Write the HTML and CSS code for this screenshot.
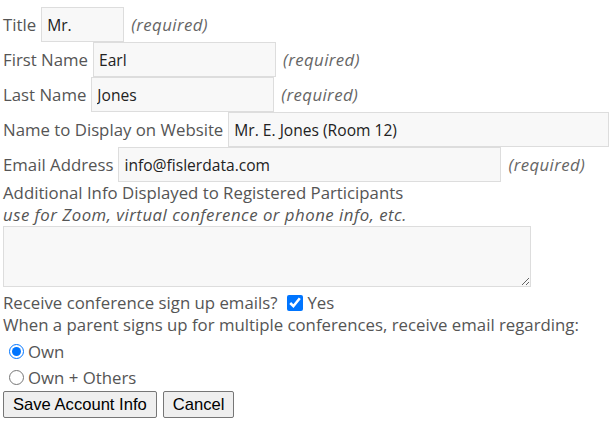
FILE: index.html
```html
<!DOCTYPE html>
<html>
<head>
<meta charset="utf-8">
<link rel="stylesheet" href="styles.css">
</head>
<body>
<form class="form">
  <div class="row">
    <label class="lbl">Title</label>
    <input class="field w-title" type="text" value="Mr.">
    <span class="req">(required)</span>
  </div>
  <div class="row">
    <label class="lbl">First Name</label>
    <input class="field w-name" type="text" value="Earl">
    <span class="req">(required)</span>
  </div>
  <div class="row">
    <label class="lbl">Last Name</label>
    <input class="field w-name" type="text" value="Jones">
    <span class="req">(required)</span>
  </div>
  <div class="row">
    <label class="lbl">Name to Display on Website</label>
    <input class="field w-wide" type="text" value="Mr. E. Jones (Room 12)">
  </div>
  <div class="row">
    <label class="lbl">Email Address</label>
    <input class="field w-wide" type="text" value="info@fislerdata.com">
    <span class="req">(required)</span>
  </div>
  <div class="line">Additional Info Displayed to Registered Participants</div>
  <div class="line hint">use for Zoom, virtual conference or phone info, etc.</div>
  <textarea class="area"></textarea>
  <div class="line check-line">Receive conference sign up emails? <label class="opt"><input class="cb" type="checkbox" checked>Yes</label></div>
  <div class="line">When a parent signs up for multiple conferences, receive email regarding:</div>
  <label class="radio-row first-radio"><input class="rb" type="radio" name="scope" checked>Own</label>
  <label class="radio-row"><input class="rb" type="radio" name="scope">Own + Others</label>
  <div class="buttons">
    <button type="button" class="btn">Save Account Info</button>
    <button type="button" class="btn">Cancel</button>
  </div>
</form>
</body>
</html>
```
FILE: styles.css
```css
html, body {
  margin: 0;
  padding: 0;
  background: #ffffff;
}
body {
  padding: 7px 3px 0 3px;
  font-family: "Open Sans", "DejaVu Sans", sans-serif;
  font-size: 16.8px;
  color: #555555;
}
.form {
  display: flex;
  flex-direction: column;
}
.row {
  display: flex;
  align-items: center;
  height: 35px;
}
.lbl {
  margin-right: 5px;
  white-space: nowrap;
}
.field {
  box-sizing: border-box;
  height: 35px;
  border: 1px solid #dddddd;
  background: #f8f8f8;
  font-family: "Open Sans", "DejaVu Sans", sans-serif;
  font-size: 15.6px;
  color: #222222;
  padding: 0 5px;
  margin: 0;
  outline: none;
  border-radius: 0;
}
.w-title { width: 83px; }
.w-name { width: 183px; }
.w-wide { width: 383px; }
.req {
  font-style: italic;
  margin-left: 7px;
  letter-spacing: 0.4px;
  color: #666666;
}
.line {
  height: 22px;
  line-height: 22px;
  white-space: nowrap;
}
.hint {
  font-style: italic;
  letter-spacing: 0.5px;
}
.area {
  box-sizing: border-box;
  width: 528px;
  height: 61px;
  margin: 0 0 5px 0;
  border: 1px solid #dddddd;
  background: #f8f8f8;
  resize: vertical;
  display: block;
}
.check-line {
  display: flex;
  align-items: center;
}
.opt {
  display: inline-flex;
  align-items: center;
  margin-left: 10px;
}
.cb {
  width: 16px;
  height: 16px;
  margin: 0 4px 0 0;
  accent-color: #0075ff;
}
.radio-row {
  display: flex;
  align-items: center;
  height: 26px;
}
.first-radio {
  margin-top: 2px;
}
.rb {
  width: 15px;
  height: 15px;
  margin: 0 4px 0 6px;
  accent-color: #0075ff;
}
.buttons {
  display: flex;
  gap: 6px;
  margin-top: 1px;
}
.btn {
  font-family: "Liberation Sans", Arial, sans-serif;
  font-size: 16.6px;
  color: #000000;
  background: #efefef;
  border: 1px solid #767676;
  border-radius: 2px;
  height: 27px;
  padding: 0 9px;
  margin: 0;
}
```
